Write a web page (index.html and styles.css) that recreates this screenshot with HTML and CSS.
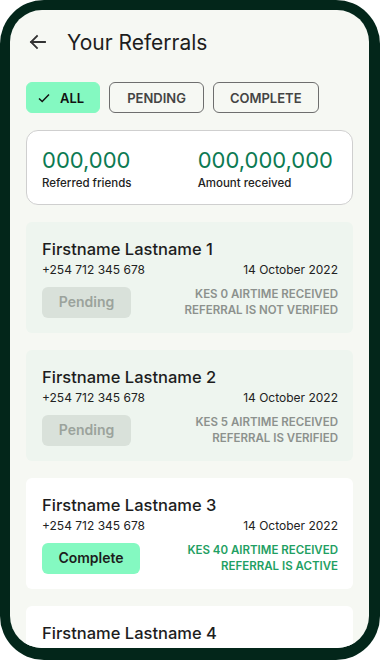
FILE: index.html
```html
<!DOCTYPE html>
<html lang="en">

<head>
  <meta charset="UTF-8">
  <meta name="viewport" content="width=device-width, initial-scale=1.0">
  <title>Your Referrals</title>

  <link rel="stylesheet" href="styles.css">

</head>

<body>
  <div class="phone">
    <div class="screen">

      <div class="header">
        <svg class="back" width="20" height="20" viewBox="0 0 20 20">
          <path d="M17 10H3M9 4L3 10l6 6" fill="none" stroke="#333" stroke-width="1.8" stroke-linecap="square"/>
        </svg>
        <h1 class="title">Your Referrals</h1>
      </div>

      <div class="chips">
        <button class="chip chip-active">
          <svg width="14" height="14" viewBox="0 0 14 14">
            <path d="M2 7.5l3.2 3L12 3.5" fill="none" stroke="#111" stroke-width="1.5"/>
          </svg>
          ALL
        </button>
        <button class="chip">PENDING</button>
        <button class="chip">COMPLETE</button>
      </div>

      <div class="stats">
        <div class="stat">
          <div class="stat-num">000,000</div>
          <div class="stat-label">Referred friends</div>
        </div>
        <div class="stat">
          <div class="stat-num">000,000,000</div>
          <div class="stat-label">Amount received</div>
        </div>
      </div>

      <div class="list">
        <div class="card card-pending">
          <div class="name">Firstname Lastname 1</div>
          <div class="row">
            <span>+254 712 345 678</span>
            <span>14 October 2022</span>
          </div>
          <div class="row row-bottom">
            <span class="status status-pending">Pending</span>
            <div class="note">KES 0 AIRTIME RECEIVED<br>REFERRAL IS NOT VERIFIED</div>
          </div>
        </div>

        <div class="card card-pending">
          <div class="name">Firstname Lastname 2</div>
          <div class="row">
            <span>+254 712 345 678</span>
            <span>14 October 2022</span>
          </div>
          <div class="row row-bottom">
            <span class="status status-pending">Pending</span>
            <div class="note">KES 5 AIRTIME RECEIVED<br>REFERRAL IS VERIFIED</div>
          </div>
        </div>

        <div class="card">
          <div class="name">Firstname Lastname 3</div>
          <div class="row">
            <span>+254 712 345 678</span>
            <span>14 October 2022</span>
          </div>
          <div class="row row-bottom">
            <span class="status status-complete">Complete</span>
            <div class="note note-active">KES 40 AIRTIME RECEIVED<br>REFERRAL IS ACTIVE</div>
          </div>
        </div>

        <div class="card">
          <div class="name">Firstname Lastname 4</div>
          <div class="row">
            <span>+254 712 345 678</span>
            <span>14 October 2022</span>
          </div>
          <div class="row row-bottom">
            <span class="status status-complete">Complete</span>
            <div class="note note-active">KES 40 AIRTIME RECEIVED<br>REFERRAL IS ACTIVE</div>
          </div>
        </div>
      </div>

    </div>
  </div>
</body>

</html>
```

FILE: styles.css
```css
* {
  box-sizing: border-box;
}

body {
  margin: 0;
  background: #fff;
  font-family: Inter, "Noto Sans", sans-serif;
  color: #1c1c1c;
}

/* phone frame */
.phone {
  width: 380px;
  height: 660px;
  padding: 10px 11px 12px 10px;
  background: #03261a;
  border-radius: 44px;
}

.screen {
  height: 100%;
  padding: 0 16px;
  background: #f6f8f3;
  border-radius: 32px;
  overflow: hidden;
}

/* header */
.header {
  display: flex;
  align-items: center;
  height: 64px;
}

.back {
  margin-left: 2px;
}

.title {
  margin: 0 0 0 19px;
  font-size: 21px;
  font-weight: 400;
  color: #1d1d1d;
}

/* filter chips */
.chips {
  display: flex;
  gap: 9px;
  margin-top: 8px;
}

.chip {
  display: flex;
  align-items: center;
  gap: 9px;
  height: 31px;
  padding: 0 17px;
  border: 1px solid #6e6e6e;
  border-radius: 6px;
  background: transparent;
  font-family: inherit;
  font-size: 13px;
  font-weight: 600;
  color: #444;
}

.chip + .chip + .chip {
  padding: 0 16px;
}

.chip-active {
  padding: 0 15px 0 10px;
  border-color: #84f9c1;
  background: #84f9c1;
  color: #111;
}

/* totals */
.stats {
  display: flex;
  height: 75px;
  margin-top: 17px;
  padding: 16px 15px 0;
  background: #fff;
  border: 1px solid #cfcfcf;
  border-radius: 12px;
}

.stat {
  flex: 1;
}

.stat + .stat {
  flex: 0 0 auto;
  padding-right: 4px;
}

.stat-num {
  font-size: 22px;
  line-height: 27px;
  color: #0c7a52;
}

.stat-label {
  margin-top: 2px;
  font-size: 11.5px;
  font-weight: 500;
  color: #222;
}

/* referral cards */
.list {
  display: flex;
  flex-direction: column;
  gap: 17px;
  margin-top: 17px;
}

.card {
  padding: 17px 15px 15px 16px;
  background: #fff;
  border-radius: 6px;
}

.card-pending {
  background: #eef5ef;
}

.name {
  font-size: 16.5px;
  line-height: 20px;
  font-weight: 500;
  color: #1d1d1d;
}

.row {
  display: flex;
  justify-content: space-between;
  margin-top: 2px;
  font-size: 12px;
  line-height: 18px;
  color: #222;
}

.row-bottom {
  align-items: center;
  margin-top: 7px;
}

.status {
  display: flex;
  align-items: center;
  justify-content: center;
  height: 31px;
  border-radius: 6px;
  font-size: 14px;
  font-weight: 600;
}

.status-pending {
  width: 89px;
  background: #d9e1da;
  color: #9ba39c;
}

.status-complete {
  width: 98px;
  background: #84f9c1;
  color: #1d1d1d;
}

.note {
  text-align: right;
  font-size: 11.5px;
  line-height: 16px;
  font-weight: 600;
  color: #8c918d;
}

.note-active {
  color: #1fa063;
}
```
